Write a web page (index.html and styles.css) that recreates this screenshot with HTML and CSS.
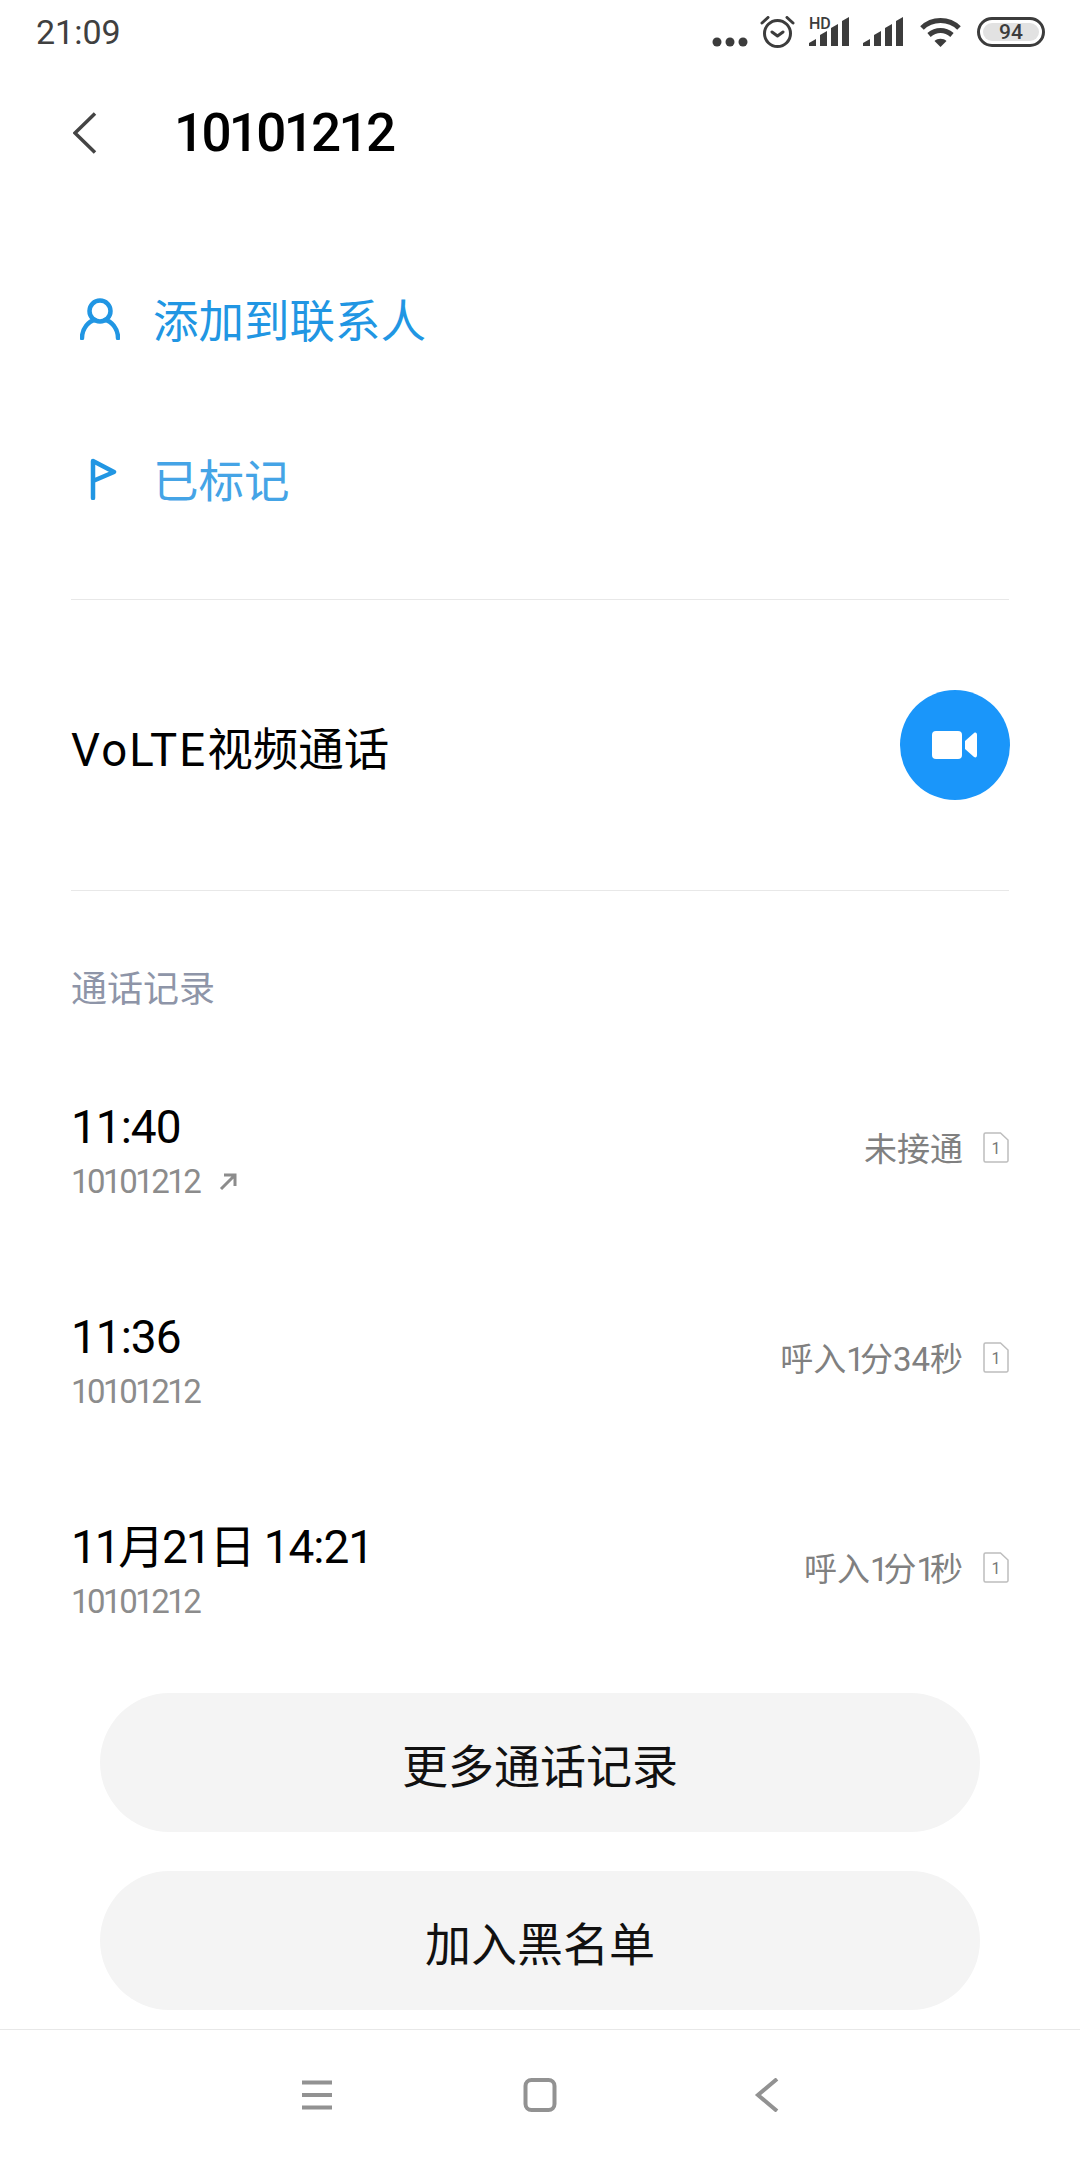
FILE: index.html
```html
<!DOCTYPE html>
<html lang="zh-CN">
<head>
    <meta charset="UTF-8">
    <meta name="viewport" content="width=device-width, initial-scale=1.0">
    <title>10101212</title>
    <link rel="stylesheet" href="styles.css">
</head>
<body>
    <div class="screen">
        <div class="status-bar">
            <span class="clock">21:09</span>
            <div class="status-icons">
                <svg class="ic-dots" width="36" height="10" viewBox="0 0 36 10"><circle cx="5" cy="5" r="4.5"/><circle cx="18" cy="5" r="4.5"/><circle cx="31" cy="5" r="4.5"/></svg>
                <svg class="ic-alarm" width="35" height="32" viewBox="0 0 35 32"><circle cx="17.500" cy="17.500" r="13"/><path d="M12 16l5.500 4 5.500-4M2 7l6-5.500M33 7l-6-5.500"/></svg>
                <svg class="ic-signal ic-signal-hd" width="40" height="34" viewBox="0 -4 40 34"><text x="0" y="12" class="hd">HD</text><path d="M0 29v-3l7-4v7zM11 29V18l7-4v15zM22 29V11l7-4v22zM33 29V4l7-4v29z"/></svg>
                <svg class="ic-signal" width="40" height="30" viewBox="0 0 40 30"><path d="M0 29v-3l7-4v7zM11 29V18l7-4v15zM22 29V11l7-4v22zM33 29V4l7-4v29z"/></svg>
                <svg class="ic-wifi" width="41" height="31" viewBox="0 0 41 31"><path d="M2 11C12 1 29 1 39 11M9 18c7-6 16-6 23 0"/><path class="wifi-dot" d="M20.500 30l-6-6c3-3 9-3 12 0z"/></svg>
                <div class="battery"><span class="battery-level">94</span></div>
            </div>
        </div>

        <div class="title-bar">
            <svg class="back-icon" width="24" height="42" viewBox="0 0 24 42"><path d="M22 1.500L2 21l20 19.500"/></svg>
            <span class="title">10101212</span>
        </div>

        <div class="actions">
            <div class="action-row">
                <svg class="action-icon" width="40" height="42" viewBox="0 0 40 42"><circle cx="20" cy="13" r="10.500"/><path d="M2 40c0-10 7-17 13-18M38 40c0-10-7-17-13-18"/></svg>
                <span class="action-text">添加到联系人</span>
            </div>
            <div class="action-row">
                <svg class="action-icon" width="40" height="42" viewBox="0 0 40 42"><path d="M13 40V3l21 11-21 9"/></svg>
                <span class="action-text action-text-light">已标记</span>
            </div>
        </div>

        <div class="call-row">
            <span class="call-text"><span class="volte">VoLTE</span>视频通话</span>
            <div class="video-btn">
                <svg width="46" height="30" viewBox="0 0 46 30"><rect x="0" y="1" width="30" height="28" rx="4"/><path d="M33 11l9-8c2-1 3 0 3 2v20c0 2-1 3-3 2l-9-8z"/></svg>
            </div>
        </div>

        <div class="history">
            <div class="history-label">通话记录</div>

            <div class="log-row">
                <div class="log-main">
                    <div class="log-time">11:40</div>
                    <div class="log-number">10101212
                        <svg class="out-arrow" width="18" height="18" viewBox="0 0 18 18"><path d="M2 16L16 2M5 2h11v11"/></svg>
                    </div>
                </div>
                <span class="log-status">未接通</span>
                <svg class="sim" width="26" height="31" viewBox="0 0 26 31"><path d="M2.500 1h15L25 8v20.500a1.500 1.500 0 0 1-1.500 1.500h-21A1.500 1.500 0 0 1 1 28.500v-26A1.500 1.500 0 0 1 2.500 1z"/><text x="13" y="21.500" class="sim-num">1</text></svg>
            </div>

            <div class="log-row">
                <div class="log-main">
                    <div class="log-time">11:36</div>
                    <div class="log-number">10101212</div>
                </div>
                <span class="log-status">呼入<span class="one">1</span>分34秒</span>
                <svg class="sim" width="26" height="31" viewBox="0 0 26 31"><path d="M2.500 1h15L25 8v20.500a1.500 1.500 0 0 1-1.500 1.500h-21A1.500 1.500 0 0 1 1 28.500v-26A1.500 1.500 0 0 1 2.500 1z"/><text x="13" y="21.500" class="sim-num">1</text></svg>
            </div>

            <div class="log-row">
                <div class="log-main">
                    <div class="log-time"><span class="log-date">11月21日</span> 14:21</div>
                    <div class="log-number">10101212</div>
                </div>
                <span class="log-status">呼入<span class="one">1</span>分<span class="one">1</span>秒</span>
                <svg class="sim" width="26" height="31" viewBox="0 0 26 31"><path d="M2.500 1h15L25 8v20.500a1.500 1.500 0 0 1-1.500 1.500h-21A1.500 1.500 0 0 1 1 28.500v-26A1.500 1.500 0 0 1 2.500 1z"/><text x="13" y="21.500" class="sim-num">1</text></svg>
            </div>
        </div>

        <div class="buttons">
            <div class="pill-btn">更多通话记录</div>
            <div class="pill-btn">加入黑名单</div>
        </div>

        <div class="nav-bar">
            <svg width="36" height="34" viewBox="0 0 36 34"><path d="M3 4.500h30M3 17h30M3 29.500h30"/></svg>
            <svg width="36" height="34" viewBox="0 0 36 34"><rect x="3.500" y="2" width="29" height="30" rx="6"/></svg>
            <svg width="36" height="34" viewBox="0 0 36 34"><path d="M32 1L13 17l19 16"/></svg>
        </div>
    </div>
</body>
</html>
```

FILE: styles.css
```css
:root {
    --blue: #2196e3;
    --blue-light: #45a4e6;
    --line: #e8e8e8;
    --grey: #808080;
    --dark: #404040;
}

* {
    box-sizing: border-box;
}

body {
    margin: 0;
    background: #fff;
    font-family: Roboto, "Noto Sans CJK SC", sans-serif;
    color: #000;
}

.screen {
    width: 1080px;
    height: 2160px;
    overflow: hidden;
}

/* status bar */
.status-bar {
    height: 64px;
    padding: 0 35px 0 36px;
    display: flex;
    justify-content: space-between;
    align-items: center;
}

.clock {
    font-size: 34px;
    color: var(--dark);
}

.status-icons {
    display: flex;
    align-items: center;
}

.status-icons svg {
    fill: #3c3c3c;
}

.ic-dots {
    margin-top: 20px;
    margin-right: 12px;
}

.ic-alarm {
    margin-right: 14px;
}

.ic-alarm circle,
.ic-alarm path {
    fill: none;
    stroke: #3c3c3c;
    stroke-width: 3;
    stroke-linecap: round;
    stroke-linejoin: round;
}

.hd {
    font-size: 16px;
    font-weight: 500;
    font-family: Roboto, sans-serif;
}

.ic-signal {
    margin-right: 14px;
}

.ic-signal-hd {
    margin-top: -4px;
}

.status-icons .ic-wifi {
    fill: none;
    margin-left: 3px;
    margin-right: 16px;
}

.ic-wifi path {
    stroke: #3c3c3c;
    stroke-width: 5;
}

.ic-wifi .wifi-dot {
    fill: #3c3c3c;
    stroke: none;
}

.battery {
    width: 68px;
    height: 30px;
    border: 3px solid #3c3c3c;
    border-radius: 15px;
    padding: 3px;
    display: flex;
}

.battery-level {
    flex: 1;
    background: #e2e2e2;
    border-radius: 9px;
    font-size: 21px;
    font-weight: 500;
    line-height: 18px;
    text-align: center;
    color: #3c3c3c;
}

/* title */
.title-bar {
    height: 138px;
    padding-left: 73px;
    display: flex;
    align-items: center;
}

.back-icon {
    fill: none;
    stroke: #444;
    stroke-width: 3.500;
    margin-right: 77px;
}

.title {
    font-size: 53px;
    font-weight: 500;
    letter-spacing: -2.700px;
}

/* top actions */
.actions {
    margin: 0 71px;
    padding: 36px 0 41px;
    border-bottom: 1px solid var(--line);
}

.action-row {
    height: 160px;
    display: flex;
    align-items: center;
}

.action-icon {
    fill: none;
    stroke: var(--blue);
    stroke-width: 4.500;
    stroke-linecap: round;
    stroke-linejoin: round;
    margin-left: 9px;
    margin-right: 33px;
    margin-top: 2px;
}

.action-text {
    font-size: 45.500px;
    color: var(--blue);
}

.action-text-light {
    color: var(--blue-light);
}

/* video call */
.call-row {
    height: 291px;
    margin: 0 71px;
    border-bottom: 1px solid var(--line);
    display: flex;
    justify-content: space-between;
    align-items: center;
}

.call-text {
    font-size: 45.500px;
    margin-top: 1px;
}

.volte {
    letter-spacing: 2.200px;
}

.video-btn {
    width: 110px;
    height: 110px;
    border-radius: 50%;
    background: #1a96fa;
    display: flex;
    align-items: center;
    justify-content: center;
    margin-right: -1px;
}

.video-btn svg {
    fill: #fff;
}

/* history */
.history {
    margin: 0 71px;
    padding-top: 73px;
}

.history-label {
    height: 50px;
    line-height: 50px;
    font-size: 36px;
    color: #8e95a8;
    margin-bottom: 31px;
    padding-top: 1px;
}

.log-row {
    height: 210px;
    display: flex;
    align-items: center;
}

.log-main {
    flex: 1;
}

.log-time {
    font-size: 46px;
    line-height: 56px;
    letter-spacing: -1px;
}

.log-date {
    letter-spacing: -2.200px;
}

.log-number {
    font-size: 33px;
    line-height: 46px;
    letter-spacing: -2.500px;
    color: #8c8c8c;
    display: flex;
    align-items: center;
    padding-top: 4px;
    margin-bottom: -4px;
}

.out-arrow {
    fill: none;
    stroke: #8c8c8c;
    stroke-width: 3;
    margin-left: 20px;
}

.log-status {
    font-size: 33px;
    color: var(--grey);
    margin-right: 20px;
    margin-top: -6px;
}

.one {
    letter-spacing: -5px;
}

.sim {
    fill: none;
    stroke: #bdbdbd;
    stroke-width: 1.500;
    margin-top: -6px;
}

.sim-num {
    font-size: 16px;
    text-anchor: middle;
    fill: #777;
    stroke: none;
}

/* bottom buttons */
.buttons {
    padding: 18px 100px 19px;
    display: flex;
    flex-direction: column;
    gap: 39px;
}

.pill-btn {
    height: 139px;
    border-radius: 70px;
    background: #f4f4f4;
    display: flex;
    align-items: center;
    justify-content: center;
    font-size: 46px;
    color: #111;
}

/* nav */
.nav-bar {
    height: 129px;
    border-top: 1px solid var(--line);
    padding: 48px 0 0 299px;
    display: flex;
    align-items: flex-start;
    gap: 187px;
}

.nav-bar svg {
    fill: none;
    stroke: #929292;
    stroke-width: 4;
}
```
